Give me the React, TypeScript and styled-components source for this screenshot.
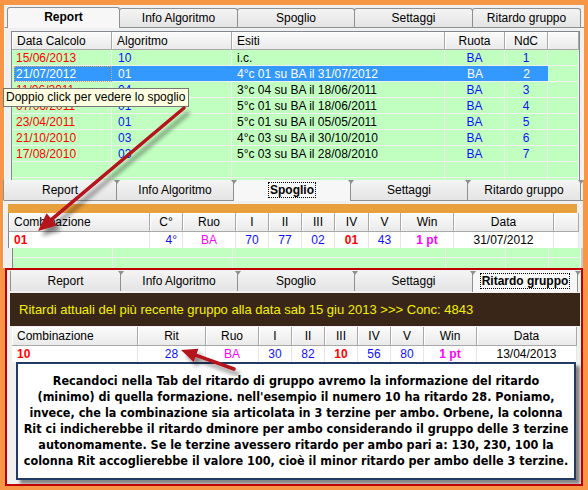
import React from "react";
import styled, { createGlobalStyle, css } from "styled-components";

const GlobalStyle = createGlobalStyle`
  html, body { margin: 0; padding: 0; background: #F79646; }
  body { font-family: "Liberation Sans", Arial, sans-serif; }
  * { box-sizing: border-box; }
`;

type Tone = "red" | "blue" | "magenta" | "black" | "white";
const toneColor: Record<Tone, string> = {
  red: "#FF0000",
  blue: "#1010FF",
  magenta: "#FF00FF",
  black: "#000000",
  white: "#FFFFFF",
};

const Page = styled.div`
  position: relative;
  width: 588px;
  height: 490px;
  overflow: hidden;
  background: #F79646;
  padding-top: 5px;
  display: flex;
  flex-direction: column;
  font-family: "Liberation Sans", Arial, sans-serif;
  font-size: 12px;
  color: #000;
`;

/* ---------- panels ---------- */
const ReportPanel = styled.section`
  flex: none;
  margin-left: 4px;
  width: 580px;
  height: 175px;
  background: #F0F0F0;
  overflow: hidden;
  display: flex;
  flex-direction: column;
`;

const SpoglioPanel = styled.section`
  flex: none;
  margin-left: 3px;
  width: 580px;
  height: 88px;
  background: #F0F0F0;
  overflow: hidden;
  display: flex;
  flex-direction: column;
`;

const RitardoPanel = styled.section`
  flex: none;
  margin-left: 5px;
  width: 578px;
  height: 218px;
  border: 2px solid #C00000;
  background: #F0F0F0;
  overflow: hidden;
  display: flex;
  flex-direction: column;
`;

/* ---------- tabs ---------- */
const TabStrip = styled.div<{ $h: number; $pad: number }>`
  flex: none;
  position: relative;
  z-index: 2;
  display: flex;
  align-items: flex-end;
  height: ${(p) => p.$h}px;
  padding-left: ${(p) => p.$pad}px;
`;

const Tab = styled.div<{ $w: number; $active?: boolean; $cropped?: boolean }>`
  position: relative;
  flex: none;
  width: ${(p) => p.$w + 1}px;
  margin-right: -1px;
  height: ${(p) => (p.$cropped ? 20 : 19)}px;
  border: 1px solid #8E8F8F;
  border-bottom: none;
  border-radius: 3px 3px 0 0;
  background: linear-gradient(#F4F4F4, #E4E4E4);
  display: flex;
  align-items: center;
  justify-content: center;
  font-size: 12px;
  color: #000;
  white-space: nowrap;
  ${(p) =>
    p.$cropped &&
    css`
      border-top: none;
      border-radius: 0;
      &::after {
        content: "";
        position: absolute;
        top: 0;
        right: -4px;
        width: 0;
        height: 0;
        border-left: 3px solid transparent;
        border-right: 3px solid transparent;
        border-top: 4px solid #8E8F8F;
        z-index: 3;
      }
    `}
  ${(p) =>
    p.$active &&
    css`
      z-index: 2;
      height: 21px;
      margin-bottom: -1px;
      background: #F7F7F7;
      font-weight: bold;
      padding-bottom: ${p.$cropped ? 1 : 2}px;
    `}
`;

const FocusLabel = styled.span`
  outline: 1px dotted #000;
  outline-offset: 0px;
  padding: 0 1px;
`;

/* ---------- list views ---------- */
const TabPage = styled.div<{ $padTop: number }>`
  flex: 1;
  border-top: 1px solid #8E8F8F;
  border-left: 1px solid #FFFFFF;
  padding-top: ${(p) => p.$padTop}px;
  display: flex;
  flex-direction: column;
`;

const ListView = styled.div<{ $left: number; $w: number }>`
  margin-left: ${(p) => p.$left}px;
  width: ${(p) => p.$w}px;
  border: 1px solid #828790;
  border-bottom: none;
  background: #C0FFC0;
  flex: 1;
`;

const GridRow = styled.div<{ $cols: string; $h: number }>`
  display: grid;
  grid-template-columns: ${(p) => p.$cols};
  height: ${(p) => p.$h}px;
`;

const HeadCell = styled.div<{ $align?: "left" | "center" }>`
  display: flex;
  align-items: center;
  justify-content: ${(p) => (p.$align === "left" ? "flex-start" : "center")};
  padding: 0 5px;
  background: linear-gradient(#FBFBFB, #EAEAEA);
  border-right: 1px solid #A8A8A8;
  border-bottom: 1px solid #A8A8A8;
  box-shadow: inset 1px 1px 0 #FFFFFF;
  white-space: nowrap;
  overflow: hidden;
  font-size: 12px;
`;

const Cell = styled.div<{
  $align?: "left" | "center" | "right";
  $tone?: Tone;
  $bold?: boolean;
  $variant: "green" | "white" | "selected";
  $pad?: number;
}>`
  display: flex;
  align-items: center;
  justify-content: ${(p) =>
    p.$align === "center" ? "center" : p.$align === "right" ? "flex-end" : "flex-start"};
  padding: 0 ${(p) => p.$pad ?? 5}px;
  white-space: nowrap;
  overflow: hidden;
  font-size: 12px;
  font-weight: ${(p) => (p.$bold ? "bold" : "normal")};
  color: ${(p) => toneColor[p.$tone ?? "black"]};
  ${(p) =>
    p.$variant === "green" &&
    css`
      background: #C0FFC0;
      border-right: 1px solid #EEF3EE;
      border-bottom: 1px solid #EEF3EE;
    `}
  ${(p) =>
    p.$variant === "white" &&
    css`
      background: #FFFFFF;
      border-right: 1px solid #E6E6E6;
    `}
  ${(p) =>
    p.$variant === "selected" &&
    css`
      background: #3399FF;
      color: #FFFFFF;
      border-bottom: 1px solid #EEF3EE;
    `}
`;

const FocusCell = styled(Cell)`
  outline: 1px dotted #E0A060;
  outline-offset: -1px;
  margin-left: 2px;
`;

/* ---------- spoglio ---------- */
const OrangeBar = styled.div`
  flex: none;
  margin-left: 4px;
  width: 569px;
  height: 9px;
  background: #E8A03C;
`;

const SpoglioTable = styled.div`
  flex: none;
  margin-left: 4px;
  width: 570px;
  border-left: 1px solid #828790;
`;

const Filler = styled.div`
  flex: 1;
  margin-left: 8px;
  width: 572px;
  border-left: 1px solid #828790;
  border-right: 3px solid #C8C8C8;
  background: #C0FFC0;
`;

/* ---------- ritardo ---------- */
const Banner = styled.div`
  flex: none;
  margin: 2px 1px 0 3px;
  height: 33px;
  background: #3A2618;
  color: #F2F200;
  font-size: 13px;
  display: flex;
  align-items: center;
  padding-left: 9px;
  white-space: nowrap;
`;

const RitTable = styled.div`
  flex: none;
  margin: 1px 0 0 5px;
  width: 565px;
`;

const NoteBox = styled.div`
  flex: none;
  margin-left: 9px;
  width: 560px;
  height: 118px;
  border: 2px solid #213A66;
  background: #FFFFFF;
  box-shadow: 4px 4px 3px rgba(0, 0, 0, 0.45);
  padding-top: 9px;
  display: flex;
  flex-direction: column;
  align-items: center;
  font-family: "DejaVu Sans Condensed", "Liberation Sans", sans-serif;
  font-weight: bold;
  font-size: 12.5px;
  line-height: 16px;
  color: #000;
`;

const NoteLine = styled.span`
  display: block;
  white-space: nowrap;
`;

/* ---------- overlays ---------- */
const Tooltip = styled.div`
  position: absolute;
  left: 3px;
  top: 88px;
  height: 19px;
  padding: 0 3px 0 2px;
  border: 1px solid #767676;
  background: #FFFFE1;
  font-size: 12px;
  line-height: 17px;
  white-space: nowrap;
  z-index: 5;
`;

const ArrowLayer = styled.svg`
  position: absolute;
  left: 0;
  top: 0;
  width: 588px;
  height: 490px;
  pointer-events: none;
  z-index: 6;
`;

/* ---------- data ---------- */
const tabNames = ["Report", "Info Algoritmo", "Spoglio", "Settaggi", "Ritardo gruppo"];

const reportCols = "100px 120px 213px 60px 43px 1fr";
const reportRows = [
  ["15/06/2013", "10", "i.c.", "BA", "1"],
  ["21/07/2012", "01", "4°c 01 su BA il 31/07/2012", "BA", "2"],
  ["11/06/2011", "04", "3°c 04 su BA il 18/06/2011", "BA", "3"],
  ["07/06/2011", "01", "5°c 01 su BA il 18/06/2011", "BA", "4"],
  ["23/04/2011", "01", "5°c 01 su BA il 05/05/2011", "BA", "5"],
  ["21/10/2010", "03", "4°c 03 su BA il 30/10/2010", "BA", "6"],
  ["17/08/2010", "03", "5°c 03 su BA il 28/08/2010", "BA", "7"],
];

type Col = {
  head: string;
  headAlign?: "left" | "center";
  value: string;
  tone: Tone;
  bold?: boolean;
  align?: "left" | "center" | "right";
};

const spoglioCols = "141px 33px 53px 33px 33px 33px 34px 32px 53px 100px 25px";
const spoglioData: Col[] = [
  { head: "Combinazione", headAlign: "left", value: "01", tone: "red", bold: true, align: "left" },
  { head: "C°", value: "4°", tone: "blue", align: "right" },
  { head: "Ruo", value: "BA", tone: "magenta" },
  { head: "I", value: "70", tone: "blue" },
  { head: "II", value: "77", tone: "blue" },
  { head: "III", value: "02", tone: "blue" },
  { head: "IV", value: "01", tone: "red", bold: true },
  { head: "V", value: "43", tone: "blue" },
  { head: "Win", value: "1 pt", tone: "magenta", bold: true },
  { head: "Data", value: "31/07/2012", tone: "black" },
  { head: "", value: "", tone: "black" },
];

const ritCols = "126px 68px 53px 33px 33px 33px 33px 33px 53px 100px";
const ritData: Col[] = [
  { head: "Combinazione", headAlign: "left", value: "10", tone: "red", bold: true, align: "left" },
  { head: "Rit", value: "28", tone: "blue" },
  { head: "Ruo", value: "BA", tone: "magenta" },
  { head: "I", value: "30", tone: "blue" },
  { head: "II", value: "82", tone: "blue" },
  { head: "III", value: "10", tone: "red", bold: true },
  { head: "IV", value: "56", tone: "blue" },
  { head: "V", value: "80", tone: "blue" },
  { head: "Win", value: "1 pt", tone: "magenta", bold: true },
  { head: "Data", value: "13/04/2013", tone: "black" },
];

const noteLines = [
  "Recandoci nella Tab del ritardo di gruppo avremo la informazione del ritardo",
  "(minimo) di quella formazione. nell'esempio il numero 10 ha ritardo 28. Poniamo,",
  "invece, che la combinazione sia articolata in 3 terzine per ambo. Orbene, la colonna",
  "Rit ci indicherebbe il ritardo dminore per ambo considerando il gruppo delle 3 terzine",
  "autonomamente. Se le terzine avessero ritardo per ambo pari a: 130, 230, 100 la",
  "colonna Rit accoglierebbe il valore 100, cioè il minor ritardo per ambo delle 3 terzine.",
];

function Tabs({
  widths,
  active,
  cropped,
  focus,
  h,
  pad,
}: {
  widths: number[];
  active: number;
  cropped?: boolean;
  focus?: boolean;
  h: number;
  pad: number;
}) {
  return (
    <TabStrip $h={h} $pad={pad}>
      {tabNames.map((name, i) => (
        <Tab key={name} $w={widths[i]} $active={i === active} $cropped={cropped}>
          {i === active && focus ? <FocusLabel>{name}</FocusLabel> : name}
        </Tab>
      ))}
    </TabStrip>
  );
}

function GreenBlankRow({ h }: { h: number }) {
  return (
    <GridRow $cols={reportCols} $h={h}>
      {[0, 1, 2, 3, 4, 5].map((i) => (
        <Cell key={i} $variant="green" />
      ))}
    </GridRow>
  );
}

function Arrow({
  tail,
  tip,
  len,
  half,
}: {
  tail: [number, number];
  tip: [number, number];
  len: number;
  half: number;
}) {
  const dx = tip[0] - tail[0];
  const dy = tip[1] - tail[1];
  const d = Math.hypot(dx, dy);
  const ux = dx / d;
  const uy = dy / d;
  const bx = tip[0] - ux * len;
  const by = tip[1] - uy * len;
  const nx = -uy;
  const ny = ux;
  const pts = `${tip[0]},${tip[1]} ${bx + nx * half},${by + ny * half} ${bx - nx * half},${by - ny * half}`;
  return (
    <g filter="url(#arrowShadow)">
      <line x1={tail[0]} y1={tail[1]} x2={bx + ux * 2} y2={by + uy * 2} stroke="#B5121B" strokeWidth={3.5} strokeLinecap="round" />
      <polygon points={pts} fill="#B5121B" />
    </g>
  );
}

export default function App() {
  return (
    <>
      <GlobalStyle />
      <Page>
        {/* Report tab */}
        <ReportPanel>
          <Tabs widths={[112, 118, 117, 118, 108]} active={0} h={22} pad={3} />
          <TabPage $padTop={3}>
            <ListView $left={6} $w={569}>
              <GridRow $cols={reportCols} $h={18}>
                <HeadCell $align="left">Data Calcolo</HeadCell>
                <HeadCell $align="left">Algoritmo</HeadCell>
                <HeadCell $align="left">Esiti</HeadCell>
                <HeadCell>Ruota</HeadCell>
                <HeadCell>NdC</HeadCell>
                <HeadCell />
              </GridRow>
              {reportRows.map((r, i) => {
                const sel = i === 1;
                const v = sel ? "selected" : "green";
                return (
                  <GridRow key={i} $cols={reportCols} $h={16}>
                    {sel ? (
                      <FocusCell $variant="selected" $pad={2}>
                        {r[0]}
                      </FocusCell>
                    ) : (
                      <Cell $variant="green" $tone="red" $pad={4}>
                        {r[0]}
                      </Cell>
                    )}
                    <Cell $variant={v} $tone="blue" $pad={6}>
                      {r[1]}
                    </Cell>
                    <Cell $variant={v} $tone="black" $pad={5}>
                      {r[2]}
                    </Cell>
                    <Cell $variant={v} $tone="blue" $align="center">
                      {r[3]}
                    </Cell>
                    <Cell $variant={v} $tone="blue" $align="center">
                      {r[4]}
                    </Cell>
                    <Cell $variant="green" />
                  </GridRow>
                );
              })}
              <GreenBlankRow h={16} />
              <GreenBlankRow h={16} />
            </ListView>
          </TabPage>
        </ReportPanel>

        {/* Spoglio tab */}
        <SpoglioPanel>
          <Tabs widths={[113, 117, 117, 117, 113]} active={2} cropped focus h={20} pad={0} />
          <TabPage $padTop={3}>
            <OrangeBar />
            <SpoglioTable>
              <GridRow $cols={spoglioCols} $h={19}>
                {spoglioData.map((c, i) => (
                  <HeadCell key={i} $align={c.headAlign}>
                    {c.head}
                  </HeadCell>
                ))}
              </GridRow>
              <GridRow $cols={spoglioCols} $h={16}>
                {spoglioData.map((c, i) => (
                  <Cell key={i} $variant="white" $tone={c.tone} $bold={c.bold} $align={c.align ?? "center"}>
                    {c.value}
                  </Cell>
                ))}
              </GridRow>
            </SpoglioTable>
            <Filler>
              <GreenBlankRow h={10} />
              <GreenBlankRow h={12} />
            </Filler>
          </TabPage>
        </SpoglioPanel>

        {/* Ritardo gruppo tab */}
        <RitardoPanel>
          <Tabs widths={[110, 117, 117, 118, 105]} active={4} cropped focus h={21} pad={3} />
          <Banner>Ritardi attuali del più recente gruppo alla data sab 15 giu 2013 &gt;&gt;&gt; Conc: 4843</Banner>
          <RitTable>
            <GridRow $cols={ritCols} $h={19}>
              {ritData.map((c, i) => (
                <HeadCell key={i} $align={c.headAlign}>
                  {c.head}
                </HeadCell>
              ))}
            </GridRow>
            <GridRow $cols={ritCols} $h={16}>
              {ritData.map((c, i) => (
                <Cell key={i} $variant="white" $tone={c.tone} $bold={c.bold} $align={c.align ?? "center"}>
                  {c.value}
                </Cell>
              ))}
            </GridRow>
          </RitTable>
          <NoteBox>
            {noteLines.map((l) => (
              <NoteLine key={l}>{l}</NoteLine>
            ))}
          </NoteBox>
        </RitardoPanel>

        <Tooltip>Doppio click per vedere lo spoglio</Tooltip>

        <ArrowLayer viewBox="0 0 588 490">
          <defs>
            <filter id="arrowShadow" x="-30%" y="-30%" width="160%" height="160%">
              <feGaussianBlur in="SourceAlpha" stdDeviation="2.2" />
              <feOffset dx="4" dy="5" result="off" />
              <feComponentTransfer>
                <feFuncA type="linear" slope="0.45" />
              </feComponentTransfer>
              <feMerge>
                <feMergeNode />
                <feMergeNode in="SourceGraphic" />
              </feMerge>
            </filter>
          </defs>
          <Arrow tail={[184, 108]} tip={[38, 231]} len={18} half={8} />
          <Arrow tail={[234, 369]} tip={[181, 350]} len={16} half={7} />
        </ArrowLayer>
      </Page>
    </>
  );
}
